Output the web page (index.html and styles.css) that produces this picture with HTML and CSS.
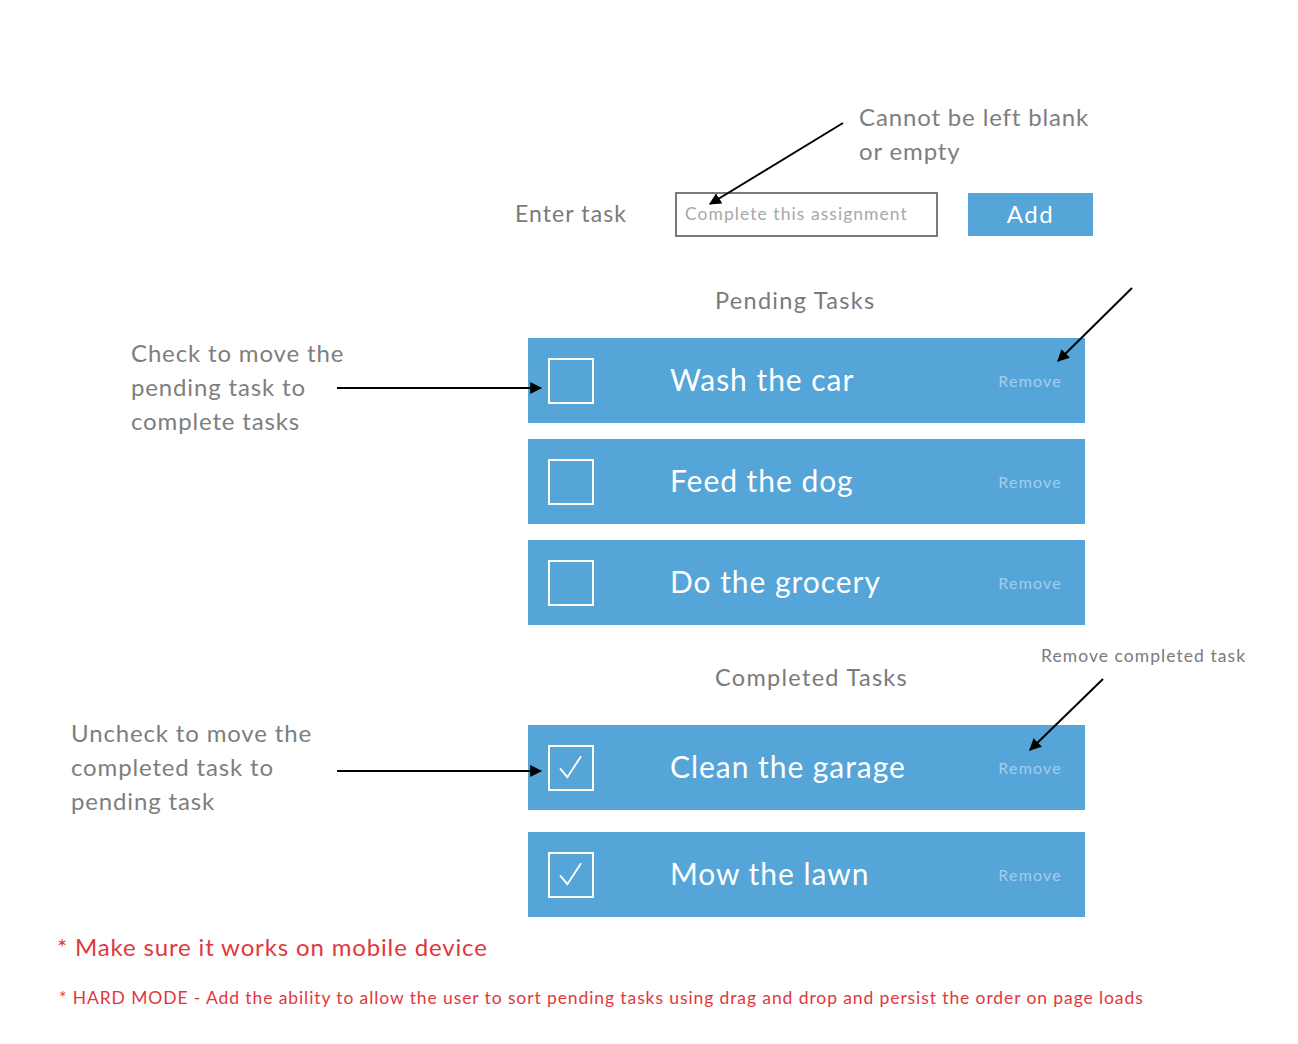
FILE: index.html
```html
<!DOCTYPE html>
<html lang="en">
<head>
<meta charset="utf-8">
<title>Todo wireframe</title>
<link rel="stylesheet" href="styles.css">
</head>
<body>
<div class="page">
  <p class="note note-top">Cannot be left blank<br>or empty</p>

  <form class="entry">
    <label class="entry-label" for="task">Enter task</label>
    <input class="entry-input" id="task" type="text" placeholder="Complete this assignment">
    <button class="entry-add" type="button">Add</button>
  </form>

  <section class="tasks">
    <h2 class="tasks-title">Pending Tasks</h2>
    <ul class="task-list">
      <li class="task"><span class="box"></span><span class="task-name">Wash the car</span><span class="remove">Remove</span></li>
      <li class="task"><span class="box"></span><span class="task-name">Feed the dog</span><span class="remove">Remove</span></li>
      <li class="task"><span class="box"></span><span class="task-name">Do the grocery</span><span class="remove">Remove</span></li>
    </ul>
  </section>

  <section class="tasks tasks-done">
    <h2 class="tasks-title">Completed Tasks</h2>
    <ul class="task-list task-list-done">
      <li class="task"><span class="box"><svg viewBox="0 0 46 46" width="42" height="42"><path d="M11 23.5 L19 33 L34 10" fill="none" stroke="#fff" stroke-width="2"/></svg></span><span class="task-name">Clean the garage</span><span class="remove">Remove</span></li>
      <li class="task"><span class="box"><svg viewBox="0 0 46 46" width="42" height="42"><path d="M11 23.5 L19 33 L34 10" fill="none" stroke="#fff" stroke-width="2"/></svg></span><span class="task-name">Mow the lawn</span><span class="remove">Remove</span></li>
    </ul>
  </section>

  <p class="warn warn-big">* Make sure it works on mobile device</p>
  <p class="warn warn-small">* HARD MODE - Add the ability to allow the user to sort pending tasks using drag and drop and persist the order on page loads</p>

  <p class="note note-check">Check to move the<br>pending task to<br>complete tasks</p>
  <p class="note note-uncheck">Uncheck to move the<br>completed task to<br>pending task</p>
  <p class="note-small note-remove">Remove completed task</p>

  <svg class="arrows" width="1298" height="1044" viewBox="0 0 1298 1044">
    <defs>
      <marker id="head" viewBox="0 0 10 10" refX="9" refY="5" markerWidth="6" markerHeight="6" markerUnits="strokeWidth" orient="auto">
        <path d="M0 0 L10 5 L0 10 z" fill="#000"/>
      </marker>
    </defs>
    <g stroke="#000" stroke-width="2" fill="none" marker-end="url(#head)">
      <line x1="843" y1="123" x2="710" y2="204"/>
      <line x1="1132" y1="288" x2="1058" y2="361"/>
      <line x1="1103" y1="679" x2="1030" y2="750"/>
      <line x1="337" y1="388" x2="541" y2="388"/>
      <line x1="337" y1="771" x2="541" y2="771"/>
    </g>
  </svg>
</div>
</body>
</html>
```

FILE: styles.css
```css
* { box-sizing: border-box; }
html, body { margin: 0; padding: 0; background: #fff; }
body { font-family: Lato, "Open Sans", "Noto Sans", sans-serif; color: #7c7c7c; }

.page {
  position: relative;
  width: 1298px;
  height: 1044px;
  padding-top: 100px;
}

.note {
  margin: 0;
  font-size: 24px;
  line-height: 34px;
  letter-spacing: 0.85px;
  color: #7e7e7e;
}
.note-top { padding-left: 859px; }

.entry {
  display: flex;
  align-items: center;
  margin: 24px 0 0;
  padding-left: 515px;
  height: 45px;
}
.entry-label {
  width: 160px;
  font-size: 23px;
  letter-spacing: 1.1px;
  color: #7a7a7a;
  padding-bottom: 3px;
}
.entry-input {
  width: 263px;
  height: 45px;
  border: 2px solid #7a7a7a;
  padding: 0 8px 2px;
  font-family: inherit;
  font-size: 17.5px;
  letter-spacing: 1.05px;
  color: #555;
  outline: none;
}
.entry-input::placeholder { color: #a8a8a8; }
.entry-add {
  margin-left: 30px;
  width: 125px;
  height: 43px;
  border: 0;
  background: #56a5d8;
  color: #fff;
  font-family: inherit;
  font-size: 24px;
  letter-spacing: 1.5px;
  padding: 0 0 3px;
}

.tasks { margin-left: 528px; width: 557px; }
.tasks-title {
  margin: 48px 0 23px;
  padding-left: 187px;
  font-size: 23.5px;
  line-height: 30px;
  letter-spacing: 1.3px;
  font-weight: 400;
  color: #7a7a7a;
}
.tasks-done .tasks-title { margin: 37px 0 33px; }

.task-list {
  list-style: none;
  margin: 0;
  padding: 0;
  display: flex;
  flex-direction: column;
  gap: 16px;
}
.task-list-done { gap: 22px; }

.task {
  display: flex;
  align-items: center;
  height: 85px;
  padding: 0 23px 0 20px;
  background: #56a5d8;
}
.box {
  flex: none;
  width: 46px;
  height: 46px;
  border: 2px solid #fff;
  display: flex;
  align-items: center;
  justify-content: center;
}
.task-name {
  flex: 1;
  margin-left: 76px;
  font-size: 30px;
  color: #fff;
  letter-spacing: 0.95px;
  padding-bottom: 4px;
}
.remove {
  font-size: 16px;
  color: #a3cdee;
  letter-spacing: 1.2px;
}

.warn {
  margin: 0;
  color: #e1373d;
}
.warn-big {
  margin-top: 15px;
  padding-left: 57px;
  font-size: 24px;
  line-height: 30px;
  letter-spacing: 0.85px;
}
.warn-small {
  margin-top: 24px;
  padding-left: 59px;
  font-size: 17.5px;
  line-height: 24px;
  letter-spacing: 0.9px;
}

.note-check { position: absolute; left: 131px; top: 336px; }
.note-uncheck { position: absolute; left: 71px; top: 716px; }
.note-small {
  margin: 0;
  font-size: 17.5px;
  line-height: 24px;
  letter-spacing: 1.05px;
  color: #7a7a7a;
}
.note-remove { position: absolute; left: 1041px; top: 644px; }

.arrows { position: absolute; left: 0; top: 0; pointer-events: none; }
```
